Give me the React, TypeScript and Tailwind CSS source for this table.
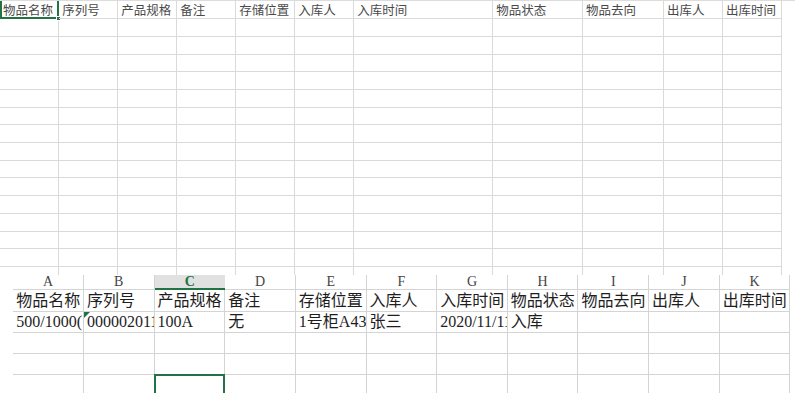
import React from "react";

const topCols = [
  "w-[59.3px]",
  "w-[59px]",
  "w-[59px]",
  "w-[59px]",
  "w-[59px]",
  "w-[59px]",
  "w-[139px]",
  "w-[89.7px]",
  "w-[81px]",
  "w-[59px]",
  "w-[59px]",
];

const headers = [
  "物品名称",
  "序列号",
  "产品规格",
  "备注",
  "存储位置",
  "入库人",
  "入库时间",
  "物品状态",
  "物品去向",
  "出库人",
  "出库时间",
];

const letters = ["A", "B", "C", "D", "E", "F", "G", "H", "I", "J", "K"];

const dataRow = [
  "500/1000(",
  "000002011",
  "100A",
  "无",
  "1号柜A43",
  "张三",
  "2020/11/11",
  "入库",
  "",
  "",
  "",
];

function TopGrid() {
  const emptyRows = Array.from({ length: 15 });
  return (
    <div className="h-[275px] overflow-hidden border-t border-[#dcdcdc] font-['Noto_Sans_CJK_SC',sans-serif] text-[12.5px] text-[#4a4a4a]">
      <div className="flex h-[18.3px]">
        {headers.map((h, i) => (
          <div
            key={i}
            className={`${topCols[i]} relative shrink-0 border-b border-r border-[#dadada]`}
          >
            <div className="flex h-full items-center overflow-hidden whitespace-nowrap pl-[3px] leading-[16px]">
              {h}
            </div>
            {i === 0 && (
              <>
                <div className="absolute -top-[3px] left-0 right-[-1px] bottom-[-1px] border-2 border-[#217346]" />
                <div className="absolute -bottom-[3px] -right-[3px] h-[5px] w-[5px] border border-white bg-[#217346]" />
              </>
            )}
          </div>
        ))}
      </div>
      {emptyRows.map((_, r) => (
        <div key={r} className="flex h-[17.7px]">
          {topCols.map((w, i) => (
            <div key={i} className={`${w} shrink-0 border-b border-r border-[#dadada]`} />
          ))}
        </div>
      ))}
    </div>
  );
}

function BottomGrid() {
  const emptyRows = [0, 1, 2];
  return (
    <div className="h-[118px] overflow-hidden font-['Liberation_Serif','Noto_Sans_CJK_SC',serif]">
      <div className="flex h-[15px] pl-[13.3px]">
        {letters.map((l, i) => (
          <div
            key={l}
            className={
              i === 2
                ? "flex w-[70.65px] shrink-0 items-center justify-center border-b-2 border-[#217346] bg-[#e1e1e1] text-[14px] font-bold leading-[14px] text-[#217346]"
                : "flex w-[70.65px] shrink-0 items-center justify-center border-b border-r border-[#d4d4d4] text-[14px] leading-[14px] text-[#444]"
            }
          >
            {l}
          </div>
        ))}
      </div>
      <div className="flex h-[21.5px] pl-[13.3px]">
        {headers.map((h, i) => (
          <div
            key={i}
            className="w-[70.65px] shrink-0 border-b border-r border-[#d4d4d4]"
          >
            <div className="flex h-full items-center overflow-hidden whitespace-nowrap pl-[3px] text-[16px] leading-[19px] text-[#1e1e1e]">
              {h}
            </div>
          </div>
        ))}
      </div>
      <div className="flex h-[21.5px] pl-[13.3px]">
        {dataRow.map((d, i) => (
          <div
            key={i}
            className="relative w-[70.65px] shrink-0 border-b border-r border-[#d4d4d4]"
          >
            <div className="flex h-full items-center overflow-hidden whitespace-nowrap pl-[3px] text-[16px] leading-[19px] text-[#1e1e1e]">
              {d}
            </div>
            {i === 1 && (
              <div className="absolute left-0 top-0 h-0 w-0 border-r-[6px] border-t-[6px] border-r-transparent border-t-[#217346]" />
            )}
          </div>
        ))}
      </div>
      {emptyRows.map((r) => (
        <div key={r} className="flex h-[21px] pl-[13.3px]">
          {letters.map((l, i) => (
            <div
              key={l}
              className="relative w-[70.65px] shrink-0 border-b border-r border-[#d4d4d4]"
            >
              {r === 2 && i === 2 && (
                <div className="absolute -left-[1px] -right-[1px] top-[-1px] bottom-[-3px] border-2 border-[#217346]" />
              )}
            </div>
          ))}
        </div>
      ))}
    </div>
  );
}

export default function App() {
  return (
    <div className="h-[393px] w-[795px] overflow-hidden bg-white">
      <TopGrid />
      <BottomGrid />
    </div>
  );
}
